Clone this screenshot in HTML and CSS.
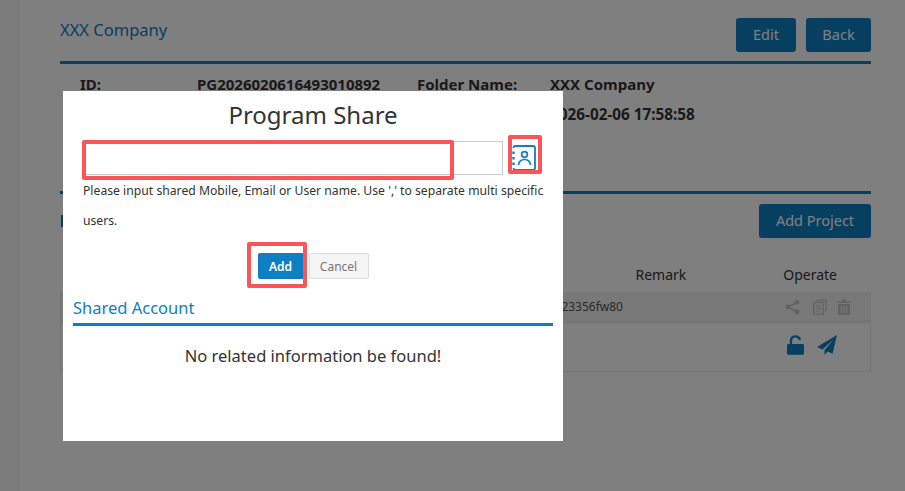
FILE: index.html
```html
<!DOCTYPE html>
<html lang="en">
<head>
<meta charset="utf-8">
<title>Program Share</title>
<link rel="stylesheet" href="styles.css">
</head>
<body>
<div class="page">
  <aside class="rail"></aside>
  <main class="main">
    <header class="top">
      <h1 class="company">XXX Company</h1>
      <div class="actions">
        <button class="btn btn-edit">Edit</button>
        <button class="btn btn-back">Back</button>
      </div>
    </header>
    <section class="info">
      <b>ID:</b><b>PG2026020616493010892</b><b>Folder Name:</b><b>XXX Company</b>
      <span></span><span></span><span></span><b class="date">2026-02-06 17:58:58</b>
    </section>
    <section class="projects">
      <span class="projects-stub"></span>
      <button class="btn btn-add">Add Project</button>
    </section>
    <div class="thead"><span>Remark</span><span>Operate</span></div>
    <div class="table">
      <div class="row row-a">
        <span class="remark">a123356fw80</span>
        <span class="ops">
          <svg class="ic ic-share" viewBox="0 0 16 16"><circle cx="3.2" cy="8" r="2.6"/><circle cx="12.6" cy="3" r="2.6"/><circle cx="12.6" cy="13" r="2.6"/><path d="M3.2 8l9.4-5M3.2 8l9.4 5" fill="none" stroke="currentColor" stroke-width="1.6"/></svg>
          <svg class="ic ic-copy" viewBox="0 0 14 16"><path d="M4.5 2.600V1h8.700v10.600h-1.600" fill="none" stroke="currentColor" stroke-width="1.200"/><path d="M.8 3.400h9.400v11.800H.8z" fill="none" stroke="currentColor" stroke-width="1.300"/><path d="M3 7h5M3 9.400h5M3 11.800h3.400" stroke="currentColor" stroke-width="1"/></svg>
          <svg class="ic ic-trash" viewBox="0 0 14 16"><path d="M0 2.600h14v1.500H0zM4.600 2.600L5.400.6h3.200l.8 2z"/><path fill-rule="evenodd" d="M1 5h12v9.200c0 1-.7 1.800-1.600 1.800H2.600C1.700 16 1 15.200 1 14.200zM3.600 6.500v7.500h1.200V6.500zM6.400 6.500v7.500h1.200V6.500zM9.200 6.500v7.500h1.200V6.500z"/></svg>
        </span>
      </div>
      <div class="row row-b">
        <span class="ops ops-strong">
          <svg class="ic ic-lock" viewBox="0 0 17 20"><path d="M1.500 9h14c.8 0 1.500.7 1.500 1.500v7.700c0 .8-.7 1.500-1.500 1.500h-14C.7 19.700 0 19 0 18.200v-7.700C0 9.700.7 9 1.500 9z"/><path d="M4 9.500V5.500C4 3 6 1.300 8.300 1.300S12.500 2.800 12.900 5" fill="none" stroke="currentColor" stroke-width="2.300"/></svg>
          <svg class="ic ic-plane" viewBox="0 0 20 20"><path d="M20 0L0 12l5.500 2.400L16.500 4.500 7.500 15.300v4.500l3.300-3.400 4.700 2.300z"/></svg>
        </span>
      </div>
    </div>
  </main>
</div>

<div class="backdrop"></div>

<div class="modal">
  <h3 class="modal-title">Program Share</h3>
  <div class="field">
    <input class="input" type="text" aria-label="Shared users">
    <svg class="book" viewBox="0 0 24 26"><path d="M1.500 3c0-1.100.9-2 2-2h17.500c1.100 0 2 .9 2 2v20c0 1.100-.9 2-2 2H3.500c-1.100 0-2-.9-2-2" fill="none" stroke="currentColor" stroke-width="1.800"/><path d="M1.500 6.500v2.500M1.500 12v2.500M1.500 17.500v2.500" stroke="currentColor" stroke-width="2.400"/><circle cx="12.500" cy="9.500" r="2.900" fill="none" stroke="currentColor" stroke-width="1.700"/><path d="M6.500 20c.4-3.500 3-5.500 6-5.500s5.600 2 6 5.500" fill="none" stroke="currentColor" stroke-width="1.700"/></svg>
  </div>
  <p class="hint">Please input shared Mobile, Email or User name. Use ',' to separate multi specific users.</p>
  <div class="modal-actions">
    <button class="mbtn mbtn-add">Add</button>
    <button class="mbtn mbtn-cancel">Cancel</button>
  </div>
  <h4 class="shared">Shared Account</h4>
  <p class="empty">No related information be found!</p>
</div>

<div class="mark mark-input"></div>
<div class="mark mark-icon"></div>
<div class="mark mark-add"></div>
</body>
</html>
```
FILE: styles.css
```css
* { box-sizing: border-box; }
html, body { margin: 0; height: 100%; overflow: hidden; }
body {
  font-family: "Noto Sans", "Open Sans", sans-serif;
  color: #333;
  background: #fff;
}
button { font-family: inherit; }

.page { display: flex; height: 491px; }
.rail { width: 19px; background: #f6f6f6; border-right: 1px solid #e8e8e8; }
.main { flex: 1; padding: 0 34px 0 41px; background: #fff; }

.top {
  display: flex; justify-content: space-between; align-items: flex-start;
  height: 64px; padding-top: 18px;
  border-bottom: 3px solid #0e7fc2;
}
.company { margin: 0; font-size: 16.500px; font-weight: 400; line-height: 24px; color: #0e7fc2; }
.actions { display: flex; gap: 10px; }
.btn {
  height: 34px; border: 0; border-radius: 3px; padding: 0 0 2px;
  background: #0e7fc2; color: #fff; font-size: 14.500px;
}
.btn-edit { width: 60px; }
.btn-back { width: 65px; }

.info {
  display: grid; grid-template-columns: 117px 220px 133px 1fr;
  grid-auto-rows: 30px; padding: 6px 0 0 20px; height: 130px;
  border-bottom: 3px solid #0e7fc2;
  font-size: 15px; line-height: 29px; color: #333;
}
.date { font-size: 15.300px; }

.projects { display: flex; justify-content: space-between; align-items: center; padding-top: 10px; height: 44px; }
.projects-stub { width: 3px; height: 12px; margin-left: 1px; background: #0e7fc2; }
.btn-add { width: 112px; }

.thead {
  display: flex; justify-content: flex-end; align-items: flex-end; gap: 97px;
  height: 54px; padding: 0 34px 7px 0;
  font-size: 14px; line-height: 20px;
}
.table { border: 1px solid #e8e8e8; border-top: 0; }
.row { display: flex; align-items: center; justify-content: flex-end; }
.row-a { height: 31px; background: #f0f0f0; border-bottom: 1px solid #e8e8e8; }
.row-b { height: 48px; padding-bottom: 5px; }
.remark { margin: 0 162px 2px 0; font-size: 12px; color: #555; }
.ops { display: flex; align-items: center; gap: 10px; width: 85px; color: #c4c4c4; }
.ops-strong { color: #0e7fc2; gap: 13px; padding-left: 2px; }
.ic { display: block; fill: currentColor; }
.ic-share { width: 15px; height: 16px; }
.ic-copy { width: 14px; height: 16px; margin-left: 3px; }
.ic-trash { width: 14px; height: 16px; }
.ic-lock { width: 17px; height: 20px; }
.ic-plane { width: 20px; height: 20px; }

.backdrop { position: fixed; inset: 0; background: rgba(0, 0, 0, .5); }

.modal {
  position: fixed; left: 63px; top: 91px; width: 500px; height: 350px;
  background: #fff; padding: 0 10px; color: #333;
}
.modal-title { margin: 0; height: 50px; font-size: 24px; font-weight: 400; line-height: 48px; text-align: center; }
.field { display: flex; align-items: center; gap: 9px; padding-left: 10px; height: 34px; }
.input { width: 420px; height: 34px; border: 1px solid #ccc; background: #fff; }
.book { width: 24px; height: 26px; color: #0e7fc2; display: block; }
.hint { margin: 1px 0 0; padding: 0 0 0 10px; font-size: 12.200px; line-height: 30px; color: #333; }
.modal-actions { display: flex; justify-content: center; gap: 5px; padding-top: 17px; }
.mbtn { height: 26px; border-radius: 2px; font-size: 12px; padding: 0; }
.mbtn-add { width: 46px; border: 0; background: #0e7fc2; color: #fff; font-weight: 600; }
.mbtn-cancel { width: 60px; border: 1px solid #ddd; background: #f5f5f5; color: #777; }
.shared {
  margin: 15px 0 0; height: 32px; font-size: 16.500px; font-weight: 400; line-height: 28px;
  color: #0e7fc2; border-bottom: 3px solid #0e7fc2;
}
.empty { margin: 17px 0 0; font-size: 16.500px; line-height: 26px; text-align: center; color: #333; }

.mark { position: fixed; border: 4px solid #fb5557; border-radius: 2px; pointer-events: none; }
.mark-input { left: 82px; top: 140px; width: 372px; height: 40px; }
.mark-icon { left: 508px; top: 135px; width: 34px; height: 39px; }
.mark-add { left: 247px; top: 242px; width: 60px; height: 46px; }
```
